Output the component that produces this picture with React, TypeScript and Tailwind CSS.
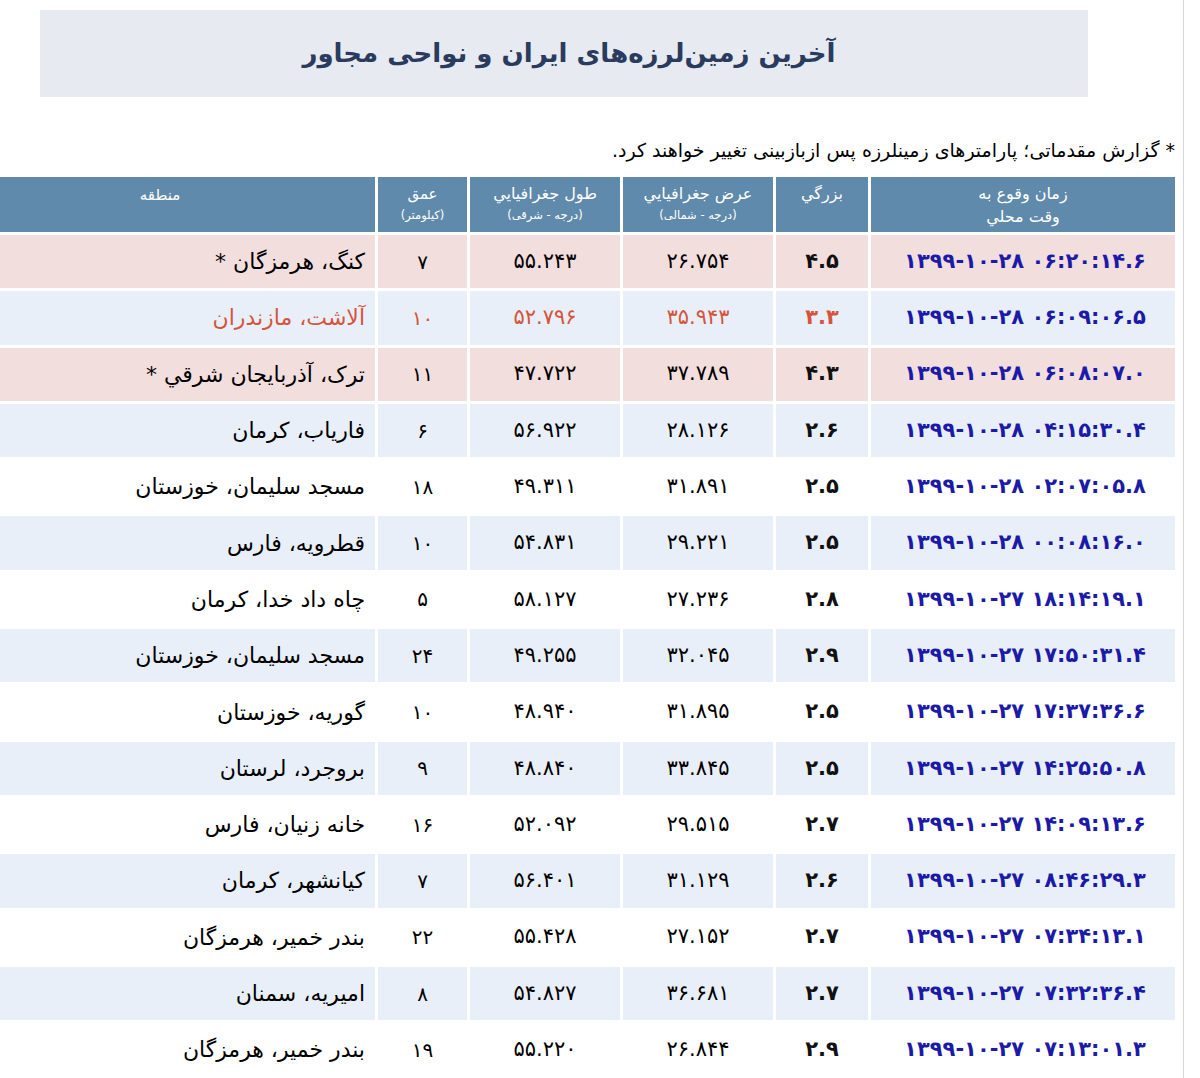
import React from "react";

type Row = {
  t: string;
  m: string;
  lat: string;
  lon: string;
  d: string;
  r: string;
  bg: "pink" | "blue" | "white";
  red?: boolean;
};

const rows: Row[] = [
  { t: "۱۳۹۹-۱۰-۲۸ ۰۶:۲۰:۱۴.۶", m: "۴.۵", lat: "۲۶.۷۵۴", lon: "۵۵.۲۴۳", d: "۷", r: "کنگ، هرمزگان *", bg: "pink" },
  { t: "۱۳۹۹-۱۰-۲۸ ۰۶:۰۹:۰۶.۵", m: "۳.۳", lat: "۳۵.۹۴۳", lon: "۵۲.۷۹۶", d: "۱۰", r: "آلاشت، مازندران", bg: "blue", red: true },
  { t: "۱۳۹۹-۱۰-۲۸ ۰۶:۰۸:۰۷.۰", m: "۴.۳", lat: "۳۷.۷۸۹", lon: "۴۷.۷۲۲", d: "۱۱", r: "ترک، آذربایجان شرقي *", bg: "pink" },
  { t: "۱۳۹۹-۱۰-۲۸ ۰۴:۱۵:۳۰.۴", m: "۲.۶", lat: "۲۸.۱۲۶", lon: "۵۶.۹۲۲", d: "۶", r: "فارياب، كرمان", bg: "blue" },
  { t: "۱۳۹۹-۱۰-۲۸ ۰۲:۰۷:۰۵.۸", m: "۲.۵", lat: "۳۱.۸۹۱", lon: "۴۹.۳۱۱", d: "۱۸", r: "مسجد سليمان، خوزستان", bg: "white" },
  { t: "۱۳۹۹-۱۰-۲۸ ۰۰:۰۸:۱۶.۰", m: "۲.۵", lat: "۲۹.۲۲۱", lon: "۵۴.۸۳۱", d: "۱۰", r: "قطرويه، فارس", bg: "blue" },
  { t: "۱۳۹۹-۱۰-۲۷ ۱۸:۱۴:۱۹.۱", m: "۲.۸", lat: "۲۷.۲۳۶", lon: "۵۸.۱۲۷", d: "۵", r: "چاه داد خدا، كرمان", bg: "white" },
  { t: "۱۳۹۹-۱۰-۲۷ ۱۷:۵۰:۳۱.۴", m: "۲.۹", lat: "۳۲.۰۴۵", lon: "۴۹.۲۵۵", d: "۲۴", r: "مسجد سليمان، خوزستان", bg: "blue" },
  { t: "۱۳۹۹-۱۰-۲۷ ۱۷:۳۷:۳۶.۶", m: "۲.۵", lat: "۳۱.۸۹۵", lon: "۴۸.۹۴۰", d: "۱۰", r: "گوريه، خوزستان", bg: "white" },
  { t: "۱۳۹۹-۱۰-۲۷ ۱۴:۲۵:۵۰.۸", m: "۲.۵", lat: "۳۳.۸۴۵", lon: "۴۸.۸۴۰", d: "۹", r: "بروجرد، لرستان", bg: "blue" },
  { t: "۱۳۹۹-۱۰-۲۷ ۱۴:۰۹:۱۳.۶", m: "۲.۷", lat: "۲۹.۵۱۵", lon: "۵۲.۰۹۲", d: "۱۶", r: "خانه زنيان، فارس", bg: "white" },
  { t: "۱۳۹۹-۱۰-۲۷ ۰۸:۴۶:۲۹.۳", m: "۲.۶", lat: "۳۱.۱۲۹", lon: "۵۶.۴۰۱", d: "۷", r: "كيانشهر، كرمان", bg: "blue" },
  { t: "۱۳۹۹-۱۰-۲۷ ۰۷:۳۴:۱۳.۱", m: "۲.۷", lat: "۲۷.۱۵۲", lon: "۵۵.۴۲۸", d: "۲۲", r: "بندر خمير، هرمزگان", bg: "white" },
  { t: "۱۳۹۹-۱۰-۲۷ ۰۷:۳۲:۳۶.۴", m: "۲.۷", lat: "۳۶.۶۸۱", lon: "۵۴.۸۲۷", d: "۸", r: "اميريه، سمنان", bg: "blue" },
  { t: "۱۳۹۹-۱۰-۲۷ ۰۷:۱۳:۰۱.۳", m: "۲.۹", lat: "۲۶.۸۴۴", lon: "۵۵.۲۲۰", d: "۱۹", r: "بندر خمير، هرمزگان", bg: "white" },
];

const bgClass = {
  pink: "bg-[#f3dede]",
  blue: "bg-[#e9eff9]",
  white: "bg-white",
};

const grid =
  "grid grid-cols-[430px_89px_150px_150px_92px_304px] gap-x-[3px]";

export default function App() {
  return (
    <div className="w-[1200px] h-[1078px] bg-white overflow-hidden" style={{ fontFamily: '"DejaVu Sans", sans-serif' }}>
      <div className="w-[1184px] h-full border-r border-[#d6d6d6] relative overflow-hidden">
        <div className="pt-[10px] pl-[40px]">
          <div className="w-[1048px] h-[87px] bg-[#e7eaf0] flex items-center justify-center">
            <h1 dir="rtl" className="text-[26px] font-bold text-[#2a3b5e] tracking-[-0.5px] pl-[10px]">
              آخرین زمین‌لرزه‌های ایران و نواحی مجاور
            </h1>
          </div>
        </div>
        <div dir="rtl" className="mt-[40px] pr-[8px] text-[19px] text-black leading-[26px] h-[40px]">
          * گزارش مقدماتی؛ پارامترهای زمینلرزه پس ازبازبینی تغییر خواهند کرد.
        </div>
        <div className="ml-[-55px] flex flex-col gap-y-[3px]">
          <div className={`${grid} h-[55px] text-white`}>
            <div className="bg-[#5f8aab] flex justify-center pt-[7px] text-[15px]">منطقه</div>
            <div className="bg-[#5f8aab] flex flex-col items-center pt-[6px]">
              <span className="text-[15px] leading-[22px]">عمق</span>
              <span className="text-[11.5px] leading-[20px]">(کیلومتر)</span>
            </div>
            <div className="bg-[#5f8aab] flex flex-col items-center pt-[6px]">
              <span className="text-[16px] leading-[22px]">طول جغرافيايي</span>
              <span className="text-[11.5px] leading-[20px]">(درجه - شرقی)</span>
            </div>
            <div className="bg-[#5f8aab] flex flex-col items-center pt-[6px]">
              <span className="text-[16px] leading-[22px]">عرض جغرافيايي</span>
              <span className="text-[11.5px] leading-[20px]">(درجه - شمالی)</span>
            </div>
            <div className="bg-[#5f8aab] flex flex-col items-center pt-[6px]">
              <span className="text-[16px] leading-[22px]">بزرگي</span>
            </div>
            <div className="bg-[#5f8aab] flex flex-col items-center pt-[5px] text-[16px]">
              <span className="leading-[23px]">زمان وقوع به</span>
              <span className="leading-[23px]">وقت محلي</span>
            </div>
          </div>
          {rows.map((row, i) => {
            const c = row.red ? "text-[#d4553c]" : "text-black";
            const b = bgClass[row.bg];
            return (
              <div key={i} className={`${grid} h-[53.3px]`}>
                <div dir="rtl" className={`${b} ${c} flex items-center pr-[10px] text-[22px]`}>
                  {row.r}
                </div>
                <div className={`${b} ${c} flex items-center justify-center text-[20px]`}>
                  <span dir="ltr" className="tracking-[3px]">{row.d}</span>
                </div>
                <div className={`${b} ${c} flex items-center justify-center text-[21px]`}>
                  <span dir="ltr" className="tracking-[3.5px]">{row.lon}</span>
                </div>
                <div className={`${b} ${c} flex items-center justify-center text-[21px]`}>
                  <span dir="ltr" className="tracking-[3.5px]">{row.lat}</span>
                </div>
                <div className={`${b} ${row.red ? c : "text-[#111]"} flex items-center justify-center text-[21px] font-bold`}>
                  <span dir="ltr" className="tracking-[2px]">{row.m}</span>
                </div>
                <div className={`${b} text-[#1b1ba8] flex items-center justify-center text-[21px] font-bold`}>
                  <span dir="ltr" className="tracking-[4px] pl-[4px]">{row.t}</span>
                </div>
              </div>
            );
          })}
        </div>
      </div>
    </div>
  );
}
